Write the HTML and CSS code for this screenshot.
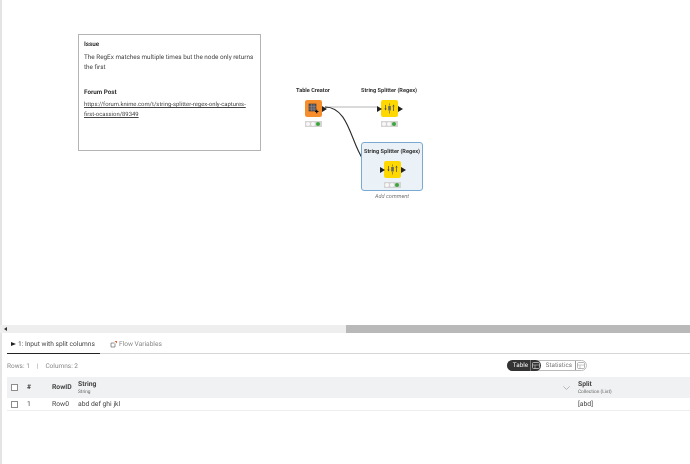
FILE: index.html
```html
<!DOCTYPE html>
<html lang="en">
<head>
<meta charset="utf-8">
<title>Workflow</title>
<link rel="stylesheet" href="styles.css">
</head>
<body>
<div class="app">
  <main class="canvas">
    <section class="note">
      <h3 class="note-title">Issue</h3>
      <p class="note-text">The RegEx matches multiple times but the node only returns the first</p>
      <h3 class="note-title note-gap">Forum Post</h3>
      <p class="note-text note-text-link"><a class="note-link" href="#">https://forum.knime.com/t/string-splitter-regex-only-captures-first-ocassion/89349</a></p>
    </section>

    <svg class="wires" width="690" height="325" viewBox="0 0 690 325">
      <path d="M325 107H377" fill="none" stroke="#dadada" stroke-width="2"/>
      <path d="M325 107C356 107 350 168 379 169" fill="none" stroke="#2b2b2b" stroke-width="1.1"/>
    </svg>

    <div class="selection"></div>

    <div class="node node-a">
      <div class="node-name">Table Creator</div>
      <div class="node-row">
        <div class="node-box box-orange">
          <svg width="11" height="11" viewBox="0 0 11 11"><rect x="1" y="1" width="7" height="7" fill="#5a5a66" stroke="#333" stroke-width=".6"/><path d="M1 3.500H8M1 6H8M3.500 1V8M6 1V8" stroke="#a09a98" stroke-width=".4"/><path d="M7 8.500H10.500M8.700 6.800V10.200" stroke="#111" stroke-width="1.200"/></svg>
        </div>
        <span class="port port-out"></span>
      </div>
      <div class="traffic"><i></i><i></i><b></b></div>
    </div>

    <div class="node node-b">
      <div class="node-name">String Splitter (Regex)</div>
      <div class="node-row">
        <span class="port port-in"></span>
        <div class="node-box box-yellow">
          <svg width="11" height="11" viewBox="0 0 11 11"><path d="M1.500 2V6" stroke="#444" stroke-width=".7"/><path d="M.4 5.500H2.600L1.500 7.500Z" fill="#444"/><path d="M9.500 3.500V8" stroke="#444" stroke-width=".7"/><path d="M8.400 3.500H10.600L9.500 1.500Z" fill="#444"/><path d="M5.500 .5V2.500M5.500 8V10.500" stroke="#555" stroke-width=".6"/><rect x="4.200" y="3" width="2.600" height="4.500" fill="#666"/></svg>
        </div>
        <span class="port port-out"></span>
      </div>
      <div class="traffic"><i></i><i></i><b></b></div>
    </div>

    <div class="node node-c">
      <div class="node-name">String Splitter (Regex)</div>
      <div class="node-row">
        <span class="port port-in"></span>
        <div class="node-box box-yellow">
          <svg width="11" height="11" viewBox="0 0 11 11"><path d="M1.500 2V6" stroke="#444" stroke-width=".7"/><path d="M.4 5.500H2.600L1.500 7.500Z" fill="#444"/><path d="M9.500 3.500V8" stroke="#444" stroke-width=".7"/><path d="M8.400 3.500H10.600L9.500 1.500Z" fill="#444"/><path d="M5.500 .5V2.500M5.500 8V10.500" stroke="#555" stroke-width=".6"/><rect x="4.200" y="3" width="2.600" height="4.500" fill="#666"/></svg>
        </div>
        <span class="port port-out"></span>
      </div>
      <div class="traffic"><i></i><i></i><b></b></div>
    </div>
    <div class="add-comment">Add comment</div>
  </main>

  <div class="hscroll">
    <span class="hscroll-arrow"></span>
    <span class="hscroll-thumb"></span>
  </div>

  <section class="panel">
    <nav class="tabs">
      <div class="tab tab-active"><span class="tab-play"></span>1: Input with split columns</div>
      <div class="tab tab-muted">
        <svg width="7" height="7" viewBox="0 0 7 7"><path d="M5 2.500V6H1V2H4.500" fill="none" stroke="#777" stroke-width=".8"/><path d="M4.500 0H7V2.500Z" fill="#e2603a"/></svg>
        Flow Variables
      </div>
    </nav>

    <div class="toolbar">
      <div class="counts"><span>Rows: 1</span><span class="counts-sep">|</span><span>Columns: 2</span></div>
      <div class="toggle">
        <div class="toggle-on"><span class="toggle-label">Table</span><span class="toggle-icon toggle-icon-on"><svg width="8" height="7" viewBox="0 0 8 7"><rect x=".5" y=".5" width="7" height="6" rx="1" fill="none" stroke="#ddd" stroke-width=".7"/><path d="M.5 3H7.500M3 3V6.500" stroke="#ddd" stroke-width=".5"/></svg></span></div>
        <div class="toggle-off"><span class="toggle-label">Statistics</span><span class="toggle-icon"><svg width="8" height="7" viewBox="0 0 8 7"><rect x=".5" y=".5" width="7" height="6" rx="1" fill="none" stroke="#999" stroke-width=".7"/><path d="M.5 3H7.500M3 3V6.500" stroke="#999" stroke-width=".5"/></svg></span></div>
      </div>
    </div>

    <div class="table">
      <div class="thead trow">
        <span class="check"></span>
        <span class="c-idx strong">#</span>
        <span class="c-rowid strong">RowID</span>
        <div class="c-string">
          <div class="strong">String</div>
          <div class="type">String</div>
        </div>
        <svg class="chev" width="7" height="4" viewBox="0 0 7 4"><path d="M.3 .3L3.500 3.500L6.700 .3" fill="none" stroke="#aaa" stroke-width=".8"/></svg>
        <div class="c-split">
          <div class="strong">Split</div>
          <div class="type">Collection (List)</div>
        </div>
      </div>
      <div class="tbody trow">
        <span class="check"></span>
        <span class="c-idx">1</span>
        <span class="c-rowid">Row0</span>
        <div class="c-string">abd def ghi jkl</div>
        <span class="chev-space"></span>
        <div class="c-split">[abd]</div>
      </div>
    </div>
  </section>
</div>
</body>
</html>
```

FILE: styles.css
```css
* { box-sizing: border-box; }
html, body { margin: 0; height: 100%; }
body {
  background: #fff;
  color: #444;
  font-family: Roboto, "Liberation Sans", sans-serif;
  font-size: 6.800px;
  text-rendering: geometricPrecision;
  overflow: hidden;
}
.app {
  width: 690px;
  height: 464px;
  display: flex;
  flex-direction: column;
  border-left: 2px solid #e4e4e4;
  will-change: transform;
}
.canvas {
  position: relative;
  height: 325px;
  margin-left: -2px;
  flex: none;
}
.note {
  position: absolute;
  left: 78px;
  top: 34px;
  width: 183px;
  height: 117px;
  border: 1px solid #b4b4b4;
  background: #fff;
  padding: 4px 5px;
}
.note-title {
  margin: 0;
  font-size: 6.300px;
  line-height: 11px;
  font-weight: 700;
  color: #333;
}
.note-gap { margin-top: 15px; }
.note-text {
  margin: 2px 0 0;
  font-size: 6.350px;
  line-height: 10px;
  color: #444;
}
.note-text-link { margin-top: 3px; font-size: 5.900px; line-height: 9.500px; }
.note-link { color: #444; text-decoration: underline; }
.wires { position: absolute; left: 0; top: 0; }
.selection {
  position: absolute;
  left: 361px;
  top: 142px;
  width: 62px;
  height: 49px;
  background: #eaf1f7;
  border: 1px solid #7aa9d2;
  border-radius: 3px;
}
.node {
  position: absolute;
  width: 70px;
  display: flex;
  flex-direction: column;
  align-items: center;
}
.node-a { left: 278px; top: 87px; }
.node-b { left: 354px; top: 87px; }
.node-c { left: 357px; top: 148px; }
.node-name {
  font-size: 5.600px;
  line-height: 9px;
  font-weight: 700;
  color: #333;
  white-space: nowrap;
}
.node-row {
  position: relative;
  margin-top: 4px;
}
.node-box {
  width: 17px;
  height: 17px;
  border-radius: 2px;
  display: flex;
  align-items: center;
  justify-content: center;
}
.box-orange { background: #f78e2e; }
.box-yellow { background: #ffd800; }
.port {
  position: absolute;
  top: 5.500px;
  width: 0;
  height: 0;
  border-top: 3px solid transparent;
  border-bottom: 3px solid transparent;
  border-left: 5px solid #222;
}
.port-in { left: -4px; }
.port-out { right: -5px; }
.traffic {
  margin-top: 4px;
  width: 17px;
  height: 6px;
  background: #d4d4d4;
  display: flex;
  align-items: center;
  justify-content: space-evenly;
}
.traffic i, .traffic b {
  display: block;
  width: 4px;
  height: 4px;
  border-radius: 50%;
  background: #f8f8f8;
}
.traffic b { background: #3aa63a; }
.add-comment {
  position: absolute;
  left: 361px;
  top: 193px;
  width: 62px;
  text-align: center;
  font-size: 5.600px;
  line-height: 8px;
  font-style: italic;
  color: #777;
}
.hscroll {
  position: relative;
  height: 8px;
  flex: none;
  margin-left: -2px;
  background: #eeeeee;
}
.hscroll-arrow {
  position: absolute;
  left: 4px;
  top: 2px;
  border-top: 2px solid transparent;
  border-bottom: 2px solid transparent;
  border-right: 3px solid #333;
}
.hscroll-thumb {
  position: absolute;
  left: 346px;
  right: 0;
  top: 0;
  bottom: 0;
  background: #b9b9b9;
}
.panel {
  flex: 1;
  padding: 0 0 0 5px;
  display: flex;
  flex-direction: column;
}
.tabs {
  display: flex;
  height: 21px;
  border-bottom: 1px solid #d6d6d6;
  align-items: stretch;
}
.tab {
  display: flex;
  align-items: center;
  gap: 2px;
  font-size: 6.600px;
  padding: 1px 0 0 4px;
  margin-bottom: -1px;
  white-space: nowrap;
}
.tab-active {
  width: 93px;
  color: #444;
  border-bottom: 1px solid #222;
}
.tab-muted {
  margin-left: 6px;
  color: #888;
  font-size: 6.600px;
}
.tab-play {
  width: 0;
  height: 0;
  flex: none;
  border-top: 2.500px solid transparent;
  border-bottom: 2.500px solid transparent;
  border-left: 5px solid #222;
}
.toolbar {
  display: flex;
  justify-content: space-between;
  align-items: center;
  height: 23px;
}
.counts {
  display: flex;
  gap: 7px;
  color: #888;
  font-size: 6.500px;
}
.counts-sep { color: #999; }
.toggle {
  display: flex;
  height: 11px;
  margin-right: 103px;
  border-radius: 6px;
  border: 1px solid #bbb;
  font-size: 6.300px;
  line-height: 9px;
}
.toggle-on {
  display: flex;
  gap: 2px;
  align-items: center;
  width: 34px;
  background: #333;
  color: #eee;
  margin: -1px 0 -1px -1px;
  border-radius: 6px;
  padding-left: 6px;
}
.toggle-off {
  display: flex;
  align-items: center;
  gap: 3px;
  color: #777;
  padding-left: 5px;
}
.toggle-label { flex: 1; }
.toggle-icon {
  display: flex;
  align-items: center;
  height: 100%;
  padding: 0 1px 0 1px;
  border-left: 1px solid #999;
}
.toggle-icon-on { border-left-color: #777; height: 11px; }
.table { display: flex; flex-direction: column; }
.trow {
  display: flex;
  align-items: center;
  padding-left: 4px;
}
.thead { height: 21px; background: #f0f1f2; }
.tbody { height: 13px; border-bottom: 1px solid #eeeeee; }
.check {
  width: 7px;
  height: 7px;
  border: 1px solid #8c8c8c;
  background: #fff;
  flex: none;
}
.c-idx { width: 25px; margin-left: 9px; flex: none; }
.c-rowid { width: 26px; flex: none; }
.c-string { width: 485px; flex: none; }
.chev { flex: none; margin-right: 8px; }
.chev-space { width: 15px; flex: none; }
.c-split { flex: none; }
.strong { font-weight: 700; color: #444; }
.type { font-size: 4.800px; line-height: 7px; color: #666; }
.thead .strong { line-height: 9px; }
```
